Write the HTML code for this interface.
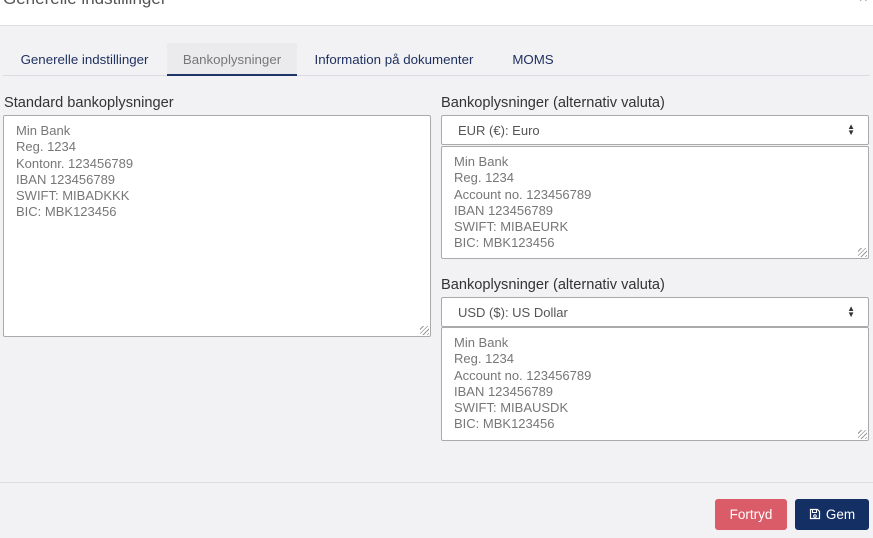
<!DOCTYPE html>
<html><head><style>
*{box-sizing:border-box;margin:0;padding:0}
body{width:873px;height:538px;overflow:hidden;background:#f2f2f4;font-family:"Liberation Sans",sans-serif;position:relative}
.hdr{position:absolute;left:0;top:0;width:873px;height:26px;background:#fff;border-bottom:1px solid #ddd}
.hdr span{position:absolute;left:3px;top:-11px;font-size:17px;color:#555}
.hdr i{position:absolute;right:5px;top:-10px;font-style:normal;color:#aaa;font-size:16px}
.tabs{position:absolute;left:3px;top:43px;width:867px;height:33px;border-bottom:1px solid #dcdce0}
.tab{position:absolute;top:0;height:33px;line-height:33px;font-size:13.3px;color:#1d2f5e;text-align:center}
.tab.act{background:#ebebed;color:#777;border-bottom:2px solid #1d3466}
.lbl{position:absolute;font-size:14.6px;color:#333}
.ta{position:absolute;background:#fff;border:1px solid #aaa;border-radius:2px;font-size:13px;color:#777;line-height:16.3px;padding:7px 12px}
.sel{position:absolute;background:#fff;border:1px solid #aaa;border-radius:2px;font-size:13px;color:#555;padding:7px 16px}
.sel b{position:absolute;right:13px;top:8px;font-size:8px;line-height:6px;color:#333}
.grip{position:absolute;right:1px;bottom:1px;width:9px;height:9px;background:repeating-linear-gradient(135deg,transparent 0 2px,#999 2px 3px)}
.foot{position:absolute;left:0;top:482px;width:873px;border-top:1px solid #ddd}
.btn{position:absolute;top:499px;height:31px;border-radius:3px;color:#fff;font-size:13.5px;line-height:31px;text-align:center}
</style></head><body>
<div class="hdr"><span>Generelle indstillinger</span><i>×</i></div>
<div class="tabs">
<div class="tab" style="left:0;width:163px">Generelle indstillinger</div>
<div class="tab act" style="left:164px;width:130px">Bankoplysninger</div>
<div class="tab" style="left:296px;width:190px">Information på dokumenter</div>
<div class="tab" style="left:496px;width:68px">MOMS</div>
</div>
<div class="lbl" style="left:4px;top:95px">Standard bankoplysninger</div>
<div class="ta" style="left:3px;top:115px;width:428px;height:222px">Min Bank<br>Reg. 1234<br>Kontonr. 123456789<br>IBAN 123456789<br>SWIFT: MIBADKKK<br>BIC: MBK123456<div class="grip"></div></div>
<div class="lbl" style="left:441px;top:95px">Bankoplysninger (alternativ valuta)</div>
<div class="sel" style="left:441px;top:115px;width:428px;height:30px">EUR (€): Euro<b>▲<br>▼</b></div>
<div class="ta" style="left:441px;top:146px;width:428px;height:113px">Min Bank<br>Reg. 1234<br>Account no. 123456789<br>IBAN 123456789<br>SWIFT: MIBAEURK<br>BIC: MBK123456<div class="grip"></div></div>
<div class="lbl" style="left:441px;top:277px">Bankoplysninger (alternativ valuta)</div>
<div class="sel" style="left:441px;top:297px;width:428px;height:30px">USD ($): US Dollar<b>▲<br>▼</b></div>
<div class="ta" style="left:441px;top:327px;width:428px;height:114px">Min Bank<br>Reg. 1234<br>Account no. 123456789<br>IBAN 123456789<br>SWIFT: MIBAUSDK<br>BIC: MBK123456<div class="grip"></div></div>
<div class="foot"></div>
<div class="btn" style="left:715px;width:72px;background:#d95c68">Fortryd</div>
<div class="btn" style="left:795px;width:74px;background:#142f63"><svg width="12" height="12" viewBox="0 0 12 12" style="vertical-align:-1px;margin-right:5px"><path d="M1.5 1.5h7l2 2v7h-9z" fill="none" stroke="#fff" stroke-width="1.2"/><path d="M3.5 1.5v3h4v-3" fill="none" stroke="#fff"/><circle cx="6" cy="8" r="1.3" fill="none" stroke="#fff"/></svg>Gem</div>
</body></html>
